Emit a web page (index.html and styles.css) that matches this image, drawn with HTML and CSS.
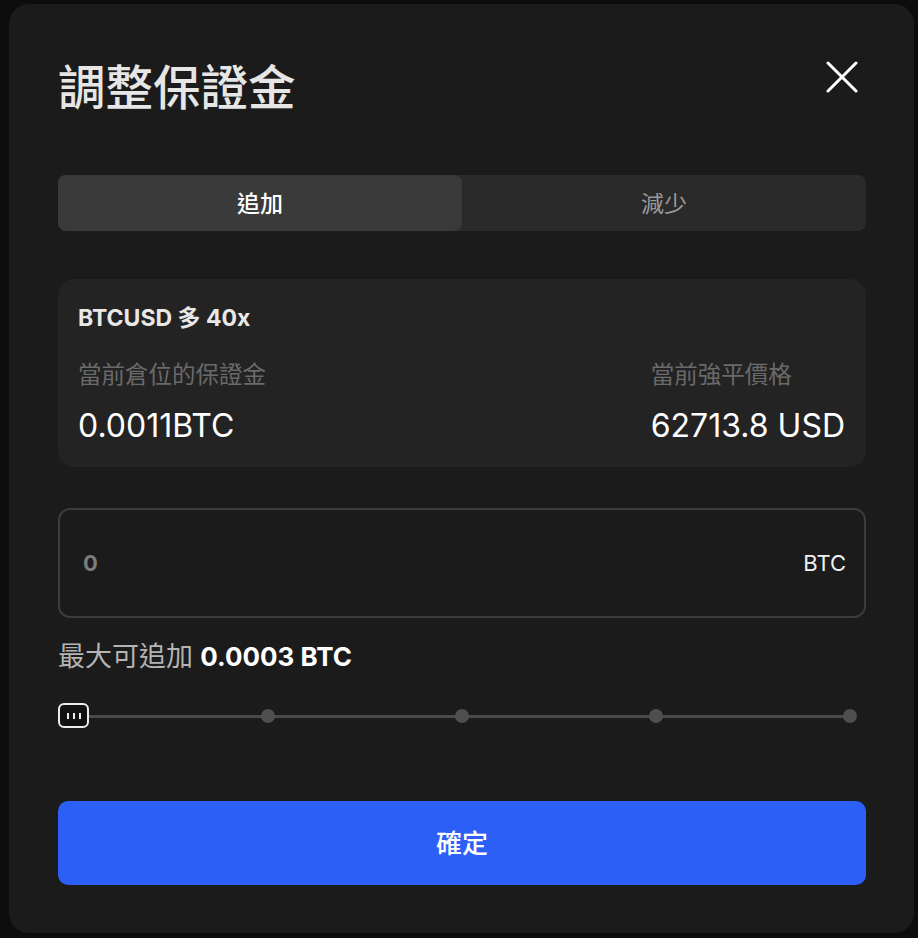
FILE: index.html
```html
<!DOCTYPE html>
<html lang="zh-Hant">
<head>
    <meta charset="UTF-8">
    <title>調整保證金</title>
    <link rel="stylesheet" href="styles.css">
</head>
<body>
    <div class="modal">
        <div class="modal-header">
            <h1 class="modal-title">調整保證金</h1>
            <svg class="close-icon" width="32" height="32" viewBox="0 0 32 32">
                <path d="M2 2 L30 30 M30 2 L2 30" stroke="#ffffff" stroke-width="3" stroke-linecap="round" fill="none"/>
            </svg>
        </div>

        <div class="tabs">
            <div class="tab active">追加</div>
            <div class="tab">減少</div>
        </div>

        <div class="info-card">
            <div class="info-title">BTCUSD 多 40x</div>
            <div class="info-row">
                <div class="info-col">
                    <div class="info-label">當前倉位的保證金</div>
                    <div class="info-value">0.0011BTC</div>
                </div>
                <div class="info-col">
                    <div class="info-label">當前強平價格</div>
                    <div class="info-value">62713.8 USD</div>
                </div>
            </div>
        </div>

        <div class="amount-input">
            <span class="amount-value">0</span>
            <span class="amount-unit">BTC</span>
        </div>

        <div class="max-line"><span class="max-label">最大可追加</span> <b>0.0003 BTC</b></div>

        <div class="slider">
            <div class="slider-track">
                <span class="dot"></span>
                <span class="dot"></span>
                <span class="dot"></span>
                <span class="dot"></span>
                <span class="dot"></span>
            </div>
            <div class="slider-handle">
                <i></i><i></i><i></i>
            </div>
        </div>

        <button class="confirm-btn">確定</button>
    </div>
</body>
</html>
```

FILE: styles.css
```css
/* General Styles */
body {
    margin: 0;
    padding: 0;
    background-color: #0c0c0c;
    font-family: Inter, "Noto Sans CJK TC", sans-serif;
    color: #fff;
}

.modal {
    width: 905px;
    height: 929px;
    box-sizing: border-box;
    margin: 4px 0 0 9px;
    padding: 56px 48px 0 49px;
    background: #1b1b1b;
    border-radius: 20px;
}

.modal-header {
    display: flex;
    justify-content: space-between;
    align-items: flex-start;
    height: 56px;
}

.modal-title {
    margin: 0;
    font-size: 47.5px;
    line-height: 56px;
    font-weight: 500;
    color: #e6e6e6;
}

.close-icon {
    margin-top: 1px;
    margin-right: 8px;
}

/* Tabs */
.tabs {
    display: flex;
    margin-top: 59px;
    height: 56px;
    background: #2a2a2a;
    border-radius: 8px;
}

.tab {
    flex: 1;
    display: flex;
    align-items: center;
    justify-content: center;
    padding-bottom: 2px;
    font-size: 23px;
    color: #9a9a9a;
    border-radius: 8px;
}

.tab.active {
    background: #3a3a3a;
    color: #fff;
    font-weight: 500;
}

/* Position card */
.info-card {
    margin-top: 48px;
    padding: 24px 21px 21px 20px;
    background: #232323;
    border-radius: 16px;
}

.info-title {
    font-size: 23px;
    line-height: 30px;
    font-weight: 700;
    color: #e8e8e8;
}

.info-row {
    display: flex;
    justify-content: space-between;
    margin-top: 26px;
}

.info-label {
    font-size: 23.5px;
    line-height: 32px;
    color: #6a6a6a;
}

.info-value {
    margin-top: 15px;
    font-size: 32px;
    line-height: 40px;
    color: #fff;
}

/* Amount input */
.amount-input {
    display: flex;
    justify-content: space-between;
    align-items: center;
    margin-top: 41px;
    height: 110px;
    box-sizing: border-box;
    padding: 0 18px 0 23px;
    border: 2px solid #3c3c40;
    border-radius: 12px;
}

.amount-value {
    font-size: 22px;
    font-weight: 700;
    color: #7c7c7c;
}

.amount-unit {
    font-size: 22px;
    color: #f0f0f0;
}

.max-line {
    margin-top: 23px;
    font-size: 26px;
    line-height: 32px;
    color: #b4b4b4;
}

.max-label {
    font-size: 27px;
}

.max-line b {
    color: #fff;
    font-weight: 700;
}

/* Slider */
.slider {
    position: relative;
    margin-top: 30px;
    height: 26px;
}

.slider-track {
    display: flex;
    justify-content: space-between;
    align-items: center;
    height: 26px;
    margin: 0 9px;
    background: linear-gradient(#4a4a4a, #4a4a4a) center / calc(100% - 14px) 3px no-repeat;
}

.dot {
    width: 14px;
    height: 14px;
    border-radius: 50%;
    background: #4f4f4f;
}

.slider-handle {
    position: absolute;
    left: 0;
    top: 0;
    width: 31px;
    height: 25px;
    box-sizing: border-box;
    border: 2px solid #ececec;
    border-radius: 6px;
    background: #111;
    display: flex;
    align-items: center;
    justify-content: center;
    gap: 4px;
}

.slider-handle i {
    width: 2px;
    height: 6px;
    background: #ececec;
}

/* Confirm */
.confirm-btn {
    display: block;
    width: 100%;
    height: 84px;
    margin-top: 72px;
    padding-bottom: 5px;
    border: none;
    border-radius: 10px;
    background: #2b5ff6;
    color: #fff;
    font-family: inherit;
    font-size: 26px;
    font-weight: 500;
}
```
